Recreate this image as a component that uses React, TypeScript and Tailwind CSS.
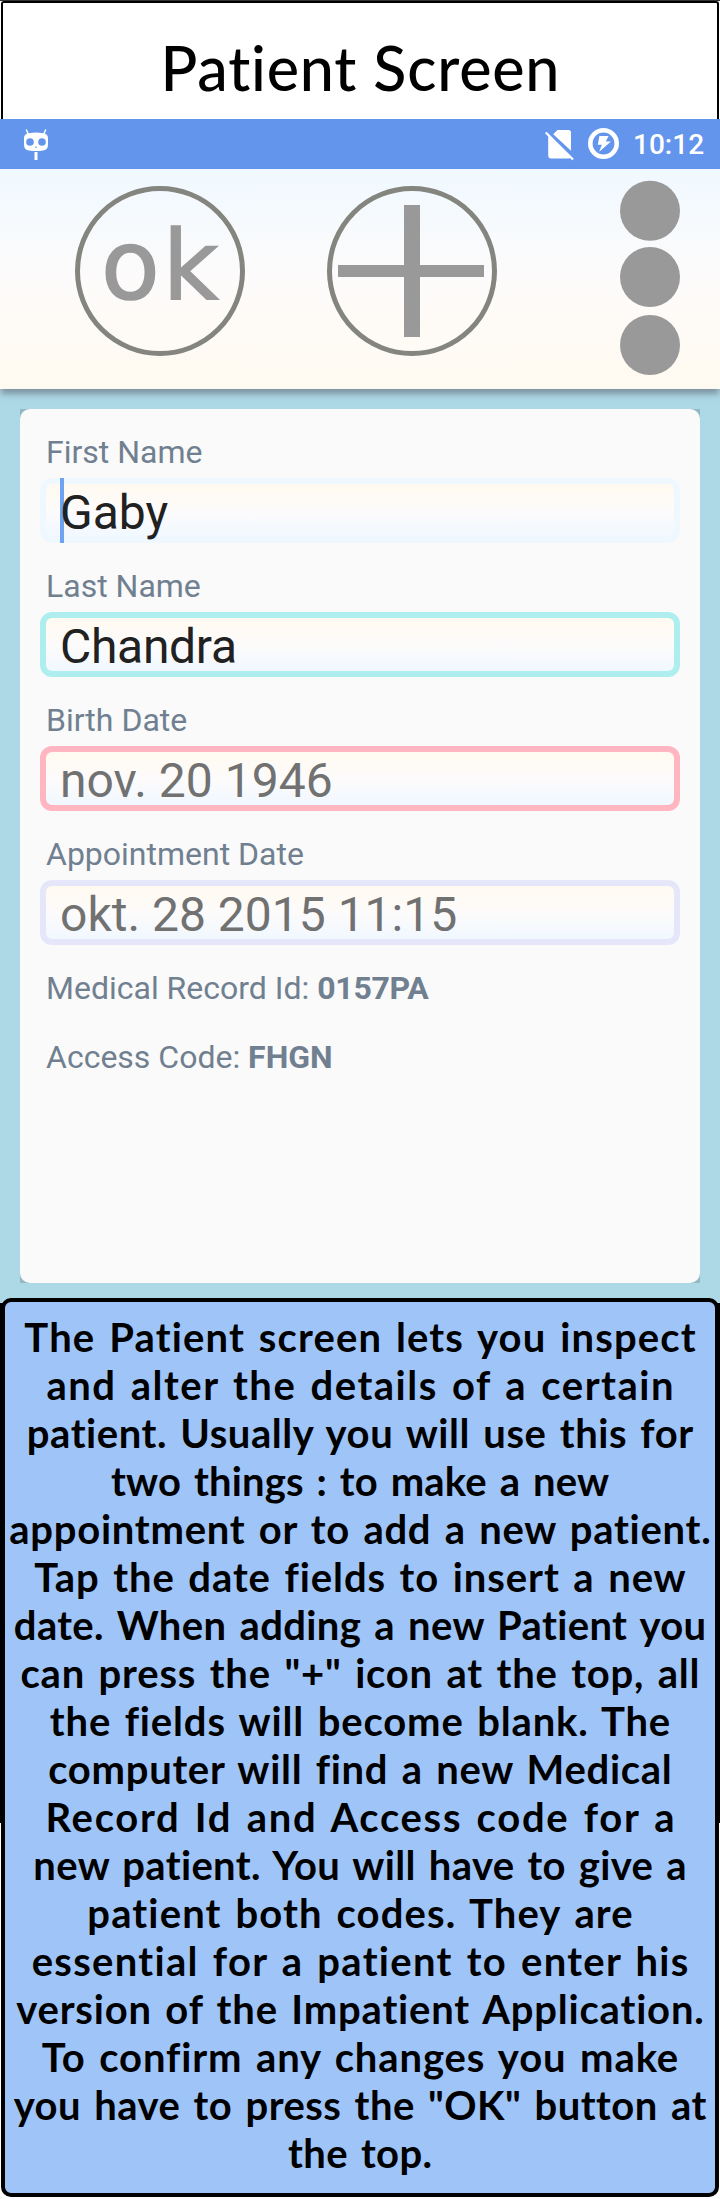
import { useLayoutEffect, useRef, useState, type ReactNode } from "react";

/** One line of text whose tracking is adjusted so that it fills `width` pixels. */
function FittedLine({ text, width }: { text: string; width: number }) {
  const ref = useRef<HTMLSpanElement>(null);
  const [tracking, setTracking] = useState(0);

  useLayoutEffect(() => {
    if (!ref.current) return;
    const natural = ref.current.getBoundingClientRect().width;
    setTracking((current) =>
      current === 0 ? (width - natural) / (text.length - 1) : current,
    );
  }, [text, width]);

  return (
    <span className="flex justify-center whitespace-nowrap">
      <span ref={ref} style={{ letterSpacing: tracking, marginRight: -tracking }}>
        {text}
      </span>
    </span>
  );
}

const helpLines: [string, number][] = [
  ["The Patient screen lets you inspect", 672],
  ["and alter the details of a certain", 627],
  ["patient. Usually you will use this for", 667],
  ["two things : to make a new", 498],
  ["appointment or to add a new patient.", 702],
  ["Tap the date fields to insert a new", 651],
  ["date. When adding a new Patient you", 693],
  ['can press the "+" icon at the top, all', 679],
  ["the fields will become blank. The", 620],
  ["computer will find a new Medical", 623],
  ["Record Id and Access code for a", 629],
  ["new patient. You will have to give a", 654],
  ["patient both codes. They are", 546],
  ["essential for a patient to enter his", 658],
  ["version of the Impatient Application.", 689],
  ["To confirm any changes you make", 636],
  ['you have to press the "OK" button at', 691],
  ["the top.", 144],
];

function StatusBar() {
  return (
    <div className="flex h-[50px] items-start bg-[#6495ed] pl-6 text-white">
      <svg className="mt-2.5 h-[32px] w-6" viewBox="0 0 24 32" fill="none">
        <path d="M2.2 0.5 4.2 5M21.8 0.5 19.8 5" stroke="currentColor" strokeWidth="1.5" />
        <path
          fill="currentColor"
          fillRule="evenodd"
          d="M5 4.2Q12 3 19 4.2Q24 4.8 24 9V16Q24 21 19 21.4Q12 22.6 5 21.4Q0 21 0 16V9Q0 4.8 5 4.2ZM6 9.2a3.8 3.8 0 1 0 0 7.6a3.8 3.8 0 1 0 0-7.6ZM18 9.2a3.8 3.8 0 1 0 0 7.6a3.8 3.8 0 1 0 0-7.6ZM10.5 17.8L12 19L13.5 17.8Z"
        />
        <rect x="10.5" y="23" width="3" height="8" fill="currentColor" />
      </svg>
      <svg className="ml-[497px] mt-2.5 h-[32px] w-[29px]" viewBox="0 0 29 32" fill="none">
        <path
          fill="currentColor"
          d="M12.5 1H23.5Q26 1 26 3.5V21.8L8.2 5.2ZM3.2 6.8V26.5Q3.2 29.5 6.2 29.5H23.5Q25 29.5 25.7 28.5Z"
        />
        <path d="M0.8 3.5 28 30.5" stroke="currentColor" strokeWidth="2.2" />
      </svg>
      <svg className="ml-[14px] mt-[9px] size-[31px]" viewBox="0 0 31 31" fill="none">
        <circle cx="15.5" cy="15.5" r="13.2" stroke="currentColor" strokeWidth="4.6" />
        <path fill="currentColor" d="M11.4 8H20.6L17.8 13.4H23L11.2 23.8L13.8 16.8H9.8Z" />
      </svg>
      <span className="ml-[14px] mt-[10px] text-[28px] font-medium leading-[32px]">10:12</span>
    </div>
  );
}

function Toolbar() {
  return (
    <div className="relative flex h-[220px] items-start bg-gradient-to-b from-[#f0f9ff] via-[#fdfbfb] to-[#fffaf0] pl-[74px] shadow-[0_6px_6px_-1px_rgba(80,80,95,0.5)]">
      <svg className="mt-4 size-[172px]" viewBox="0 0 172 172" fill="none">
        <circle cx="86" cy="86" r="82.5" stroke="#85857f" strokeWidth="5" />
        <text
          x="27"
          y="113.5"
          strokeWidth="1.6"
          className="fill-[#999999] stroke-[#999999] font-['DejaVu_Sans',sans-serif] text-[96px] tracking-[3px]"
        >
          ok
        </text>
      </svg>
      <svg className="ml-20 mt-4 size-[172px]" viewBox="0 0 172 172" fill="none">
        <circle cx="86" cy="86" r="82.5" stroke="#85857f" strokeWidth="5" />
        <path d="M78 20H94V80H158V92H94V152H78V92H12V80H78Z" fill="#999999" />
      </svg>
      <svg className="ml-[122px] mt-[11px] h-[196px] w-[60px]" viewBox="0 0 60 196" fill="#999999">
        <circle cx="30" cy="30.7" r="30" />
        <circle cx="30" cy="97" r="30" />
        <circle cx="30" cy="165" r="30" />
      </svg>
    </div>
  );
}

function Field({
  label,
  tone,
  caret = false,
  children,
}: {
  label: string;
  tone: string;
  caret?: boolean;
  children: ReactNode;
}) {
  return (
    <div className="mb-6">
      <div className="mb-[7px] pl-1.5 text-[32px] leading-[38px] text-[#708090]">{label}</div>
      <div
        className={`relative h-[65px] rounded-xl border-[6px] bg-gradient-to-b from-[#fffaf0] via-[#fdfbfb] to-[#f0f8ff] pl-3.5 text-[48px] leading-[57px] whitespace-nowrap ${tone}`}
      >
        {caret && <span className="absolute -top-1.5 left-3.5 h-[65px] w-1 bg-[#6ea3f2]" />}
        <span className="relative">{children}</span>
      </div>
    </div>
  );
}

export default function App() {
  return (
    <div className="flex h-[2199px] w-[720px] flex-col overflow-hidden bg-white font-[Roboto,sans-serif]">
      <header className="h-[119px] border-t border-[#333333] px-px">
        <h1 className="h-[118px] rounded-t-[3px] border-x-2 border-t-2 border-black pt-[28px] font-[Lato,sans-serif] text-[61px] font-medium leading-[73px] text-black">
          <FittedLine text="Patient Screen" width={400} />
        </h1>
      </header>

      <StatusBar />
      <Toolbar />

      <main className="h-[914px] bg-[#add8e6] px-5 pt-5">
        <div className="bg-[#93b9c6]">
          <section className="h-[874px] rounded-[10px] bg-[#fafafa] px-5 pt-6">
            <Field label="First Name" tone="border-[#f0f8ff] text-[#212121]" caret>
              Gaby
            </Field>
            <Field label="Last Name" tone="border-[#afeeee] text-[#212121] tracking-[-0.3px]">
              Chandra
            </Field>
            <Field label="Birth Date" tone="border-[#ffb6c1] text-[#717171]">
              nov. 20 1946
            </Field>
            <Field label="Appointment Date" tone="border-[#e6e6fa] text-[#717171]">
              okt. 28 2015 11:15
            </Field>
            <div className="flex flex-col gap-[31px] pl-1.5 text-[32px] leading-[38px] text-[#708090]">
              <p>
                Medical Record Id: <b className="font-bold tracking-[-0.3px]">0157PA</b>
              </p>
              <p>
                Access Code: <b className="font-bold">FHGN</b>
              </p>
            </div>
          </section>
        </div>
      </main>

      <div className="relative -mt-[5px] h-[901px] px-px">
        <div className="absolute inset-x-0 top-[5px] h-[520px] bg-black" />
        <section className="relative h-[899px] rounded-[10px] border-4 border-black bg-[#9fc5f8] pt-[11px] font-[Lato,sans-serif] text-[40px] font-bold leading-[48px] text-black [word-spacing:3px]">
          {helpLines.map(([text, width]) => (
            <FittedLine key={text} text={text} width={width} />
          ))}
        </section>
      </div>
    </div>
  );
}
